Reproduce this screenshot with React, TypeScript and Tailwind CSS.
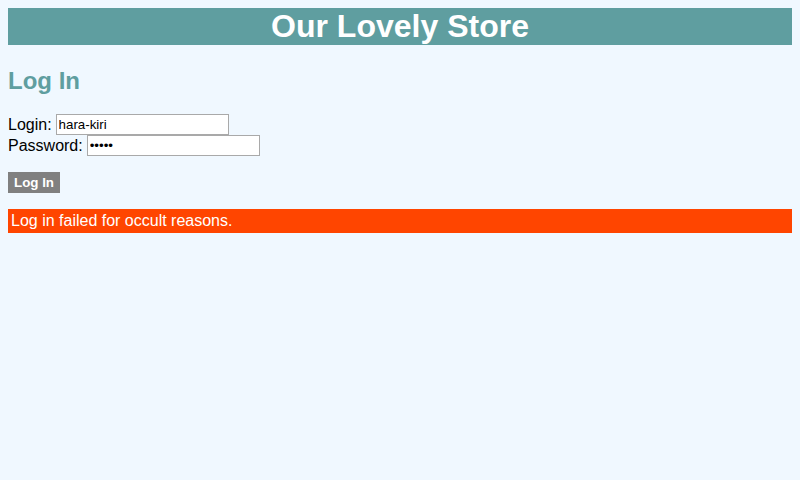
export default function App() {
  return (
    <div className="min-h-screen bg-[#f0f8ff] p-2 font-['Liberation_Sans',Arial,sans-serif] text-black">
      {/* Store header */}
      <h1 className="bg-[#5f9ea0] text-center text-[32px] font-bold leading-[37px] text-white">
        Our Lovely Store
      </h1>

      <h2 className="mt-[22px] mb-[19px] text-[24px] font-bold leading-[28px] text-[#5f9ea0]">
        Log In
      </h2>

      <form onSubmit={(e) => e.preventDefault()}>
        <div className="flex h-[21px] items-center text-[16px]">
          <label htmlFor="login" className="mr-[4px]">Login:</label>
          <input
            id="login"
            type="text"
            defaultValue="hara-kiri"
            className="h-[21px] w-[173px] border border-[#a9a9a9] bg-white px-[2px] text-[13.33px] outline-none"
          />
        </div>
        <div className="flex h-[21px] items-center text-[16px]">
          <label htmlFor="password" className="mr-[4px]">Password:</label>
          <input
            id="password"
            type="password"
            defaultValue="12345"
            className="h-[21px] w-[173px] border border-[#a9a9a9] bg-white px-[2px] text-[13.33px] outline-none"
          />
        </div>
        <button
          type="submit"
          className="mt-[16px] block h-[21px] w-[52px] bg-[#808080] text-[13.33px] font-bold text-white"
        >
          Log In
        </button>
      </form>

      <div className="mt-[16px] bg-[#ff4500] px-[3px] py-[3px] text-[16px] leading-[18px] text-white">
        Log in failed for occult reasons.
      </div>
    </div>
  );
}
